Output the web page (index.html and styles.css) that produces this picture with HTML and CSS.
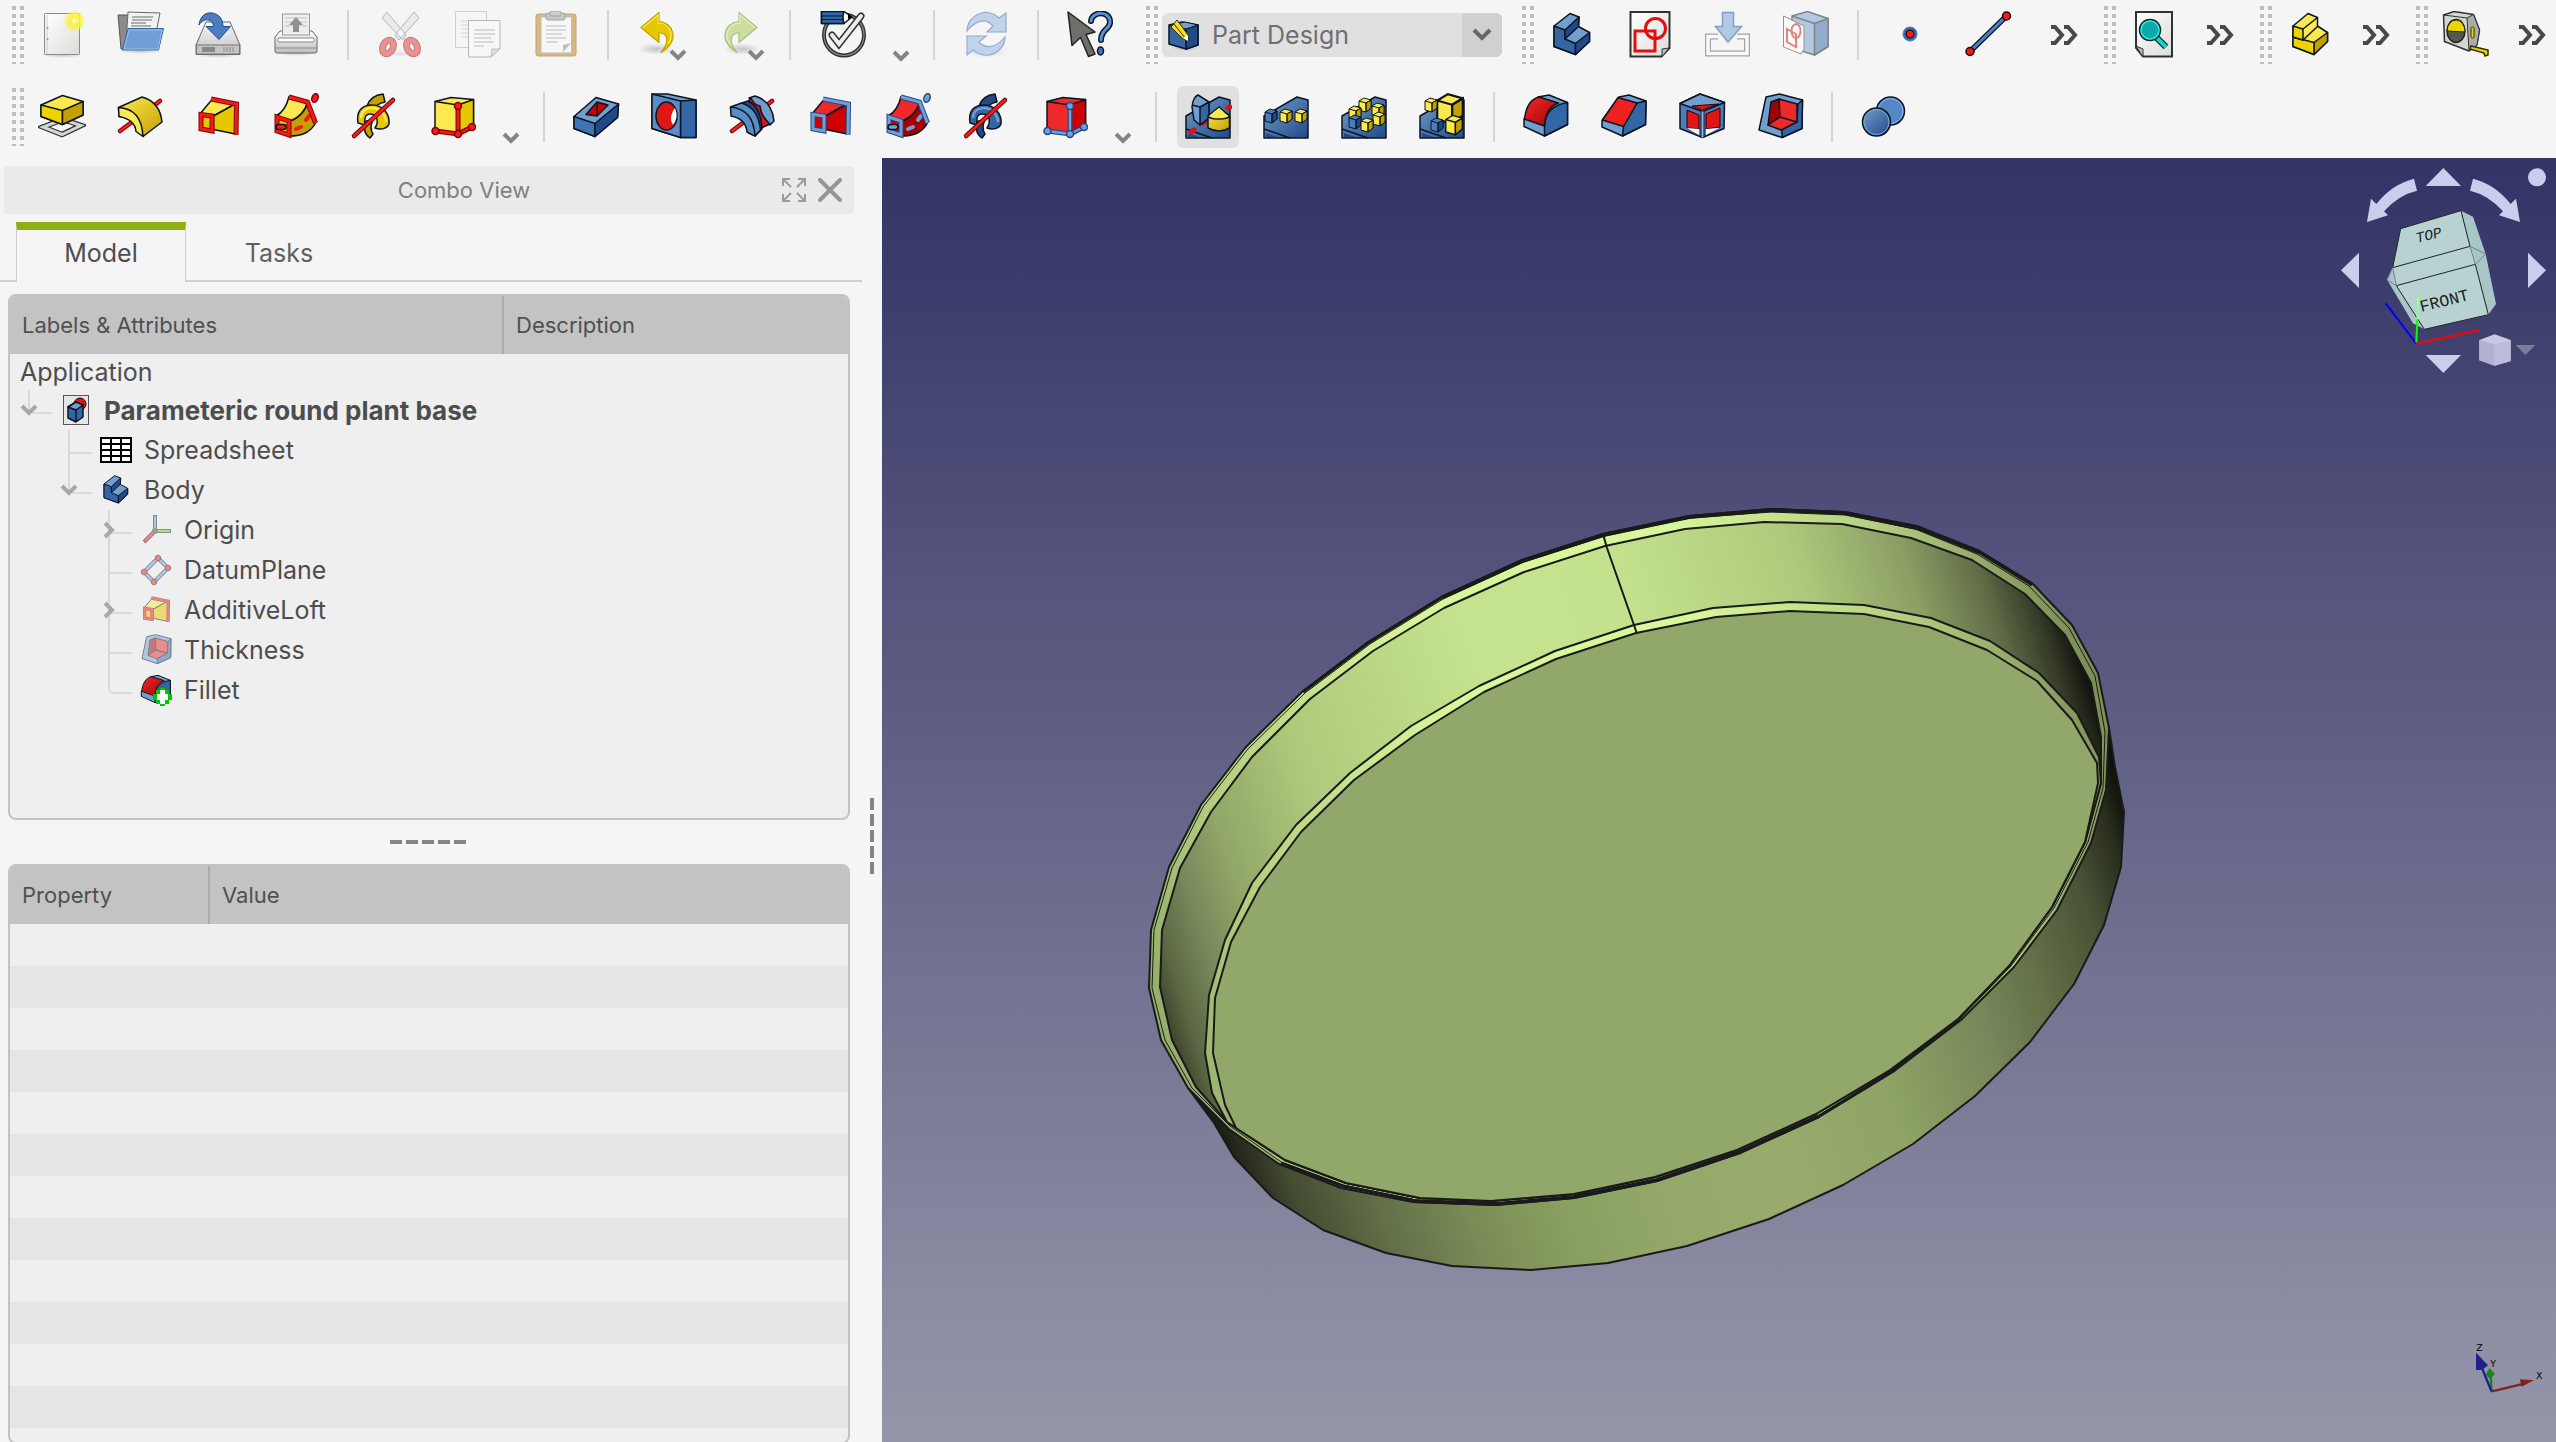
FILE: index.html
```html
<!DOCTYPE html>
<html lang="en">
<head>
<meta charset="utf-8">
<title>FreeCAD</title>
<link rel="stylesheet" href="styles.css">
</head>
<body>
<svg class="defs" aria-hidden="true">
  <defs>
    <linearGradient id="gy" x1="0" y1="0" x2="1" y2="1"><stop offset="0" stop-color="#fce94f"/><stop offset="1" stop-color="#c4a000"/></linearGradient>
    <linearGradient id="gb" x1="0" y1="0" x2="1" y2="1"><stop offset="0" stop-color="#729fcf"/><stop offset="1" stop-color="#204a87"/></linearGradient>
    <linearGradient id="gr" x1="0" y1="0" x2="1" y2="1"><stop offset="0" stop-color="#ef2929"/><stop offset="1" stop-color="#a40000"/></linearGradient>
    <linearGradient id="gg" x1="0" y1="0" x2="0" y2="1"><stop offset="0" stop-color="#fdfdfd"/><stop offset="1" stop-color="#bdbdbd"/></linearGradient>
    <linearGradient id="gp" x1="0" y1="0" x2="1" y2="1"><stop offset="0" stop-color="#fff"/><stop offset="1" stop-color="#dcdcd8"/></linearGradient>
    <radialGradient id="sun"><stop offset="0" stop-color="#fff"/><stop offset=".3" stop-color="#fbf24a"/><stop offset=".7" stop-color="#fbf24a" stop-opacity=".8"/><stop offset="1" stop-color="#fbf24a" stop-opacity="0"/></radialGradient>
    <radialGradient id="shade"><stop offset="0" stop-color="#000" stop-opacity=".2"/><stop offset="1" stop-color="#000" stop-opacity="0"/></radialGradient>
  </defs>
  <symbol id="cube" viewBox="0 0 14 16">
    <path class="a" d="M1 4 6 1l7 2v8l-5 4-7-2z"/><path class="b" d="M8 6l5-3v8l-5 4z"/><path class="n" d="M1 4l7 2v9M8 6l5-3"/>
  </symbol>
  <symbol id="plane" viewBox="0 0 48 48">
    <path class="o" fill="url(#gb)" d="M2 23 35 4l11 3v38H2z"/><path class="n" d="M2 36l26 9"/><path fill="#204a87" d="M4 40l11 4H4z"/>
  </symbol>
  <symbol id="body" viewBox="0 0 48 48">
    <path class="o" fill="#729fcf" d="M6 15 22 2.500l9 3.500-.5 9.500 11 6v9L27.500 43.500 6 35.500z"/>
    <path class="o" fill="#3465a4" d="M6 15l11 4v9l10.500 4.500v11L6 35.500z"/>
    <path class="o" fill="#204a87" d="M27.500 32.500l14-11v9l-14 13zM17 19 31 6l-.5 9.500L17 28z"/>
  </symbol>
  <symbol id="loft" viewBox="0 0 48 48">
    <path class="o" fill="var(--lt)" d="M5.500 21.500 18 6.500l24 4-22.500 12.500z"/>
    <path class="o" fill="var(--md)" d="M19.500 23 42 10.500 41.500 41l-22-4.500z"/>
    <path fill="none" stroke="var(--fo)" stroke-width="5" d="M17 6l25.500 5-.5 31"/>
    <path fill="none" stroke="var(--fr)" stroke-width="3" d="M17 6l25.500 5-.5 31"/>
    <path fill="var(--md)" stroke="var(--fo)" stroke-width="5" d="M7 21.500l11 1.500v15L7 36z"/>
    <path fill="none" stroke="var(--fr)" stroke-width="3" d="M7 21.500l11 1.500v15L7 36z"/>
  </symbol>
  <symbol id="pipe" viewBox="0 0 48 48">
    <path class="o" fill="var(--dk)" d="M17.500 28C28 24 34 17 36 8l8 21C39 39 31 43 17 43z"/>
    <path class="o" fill="var(--lt)" d="M4 23C12 19 15 12 17 3.500L36 8c-3 10-9 17-18 20z"/>
    <path stroke="var(--fr)" stroke-width="4" stroke-linecap="round" d="M24 36l5-2M34 27l3-4"/>
    <path fill="none" stroke="var(--fo)" stroke-width="5" d="M17 4l18.500 5 8 21"/>
    <path fill="none" stroke="var(--fr)" stroke-width="3" d="M17 4l18.500 5 8 21"/>
    <path fill="var(--md)" stroke="var(--fo)" stroke-width="5" d="M5 24l12 4v14L5 38z"/>
    <path fill="none" stroke="var(--fr)" stroke-width="3" d="M5 24l12 4v14L5 38z"/>
    <ellipse cx="43" cy="5" rx="3" ry="4.500" transform="rotate(20 43 5)" fill="var(--fr)" stroke="var(--fo)" stroke-width="1.500"/>
    <rect x="4" y="31.500" width="10" height="5" rx="2.500" fill="var(--fr)" stroke="#111" stroke-width="1.500"/>
  </symbol>
  <symbol id="helix" viewBox="0 0 48 48">
    <path class="o" fill="var(--dk)" d="M17 13C19 7 24 2 33 1l2 8c-6 1-10 4-12 9zM16 28l7-1c-3 6-2 11 0 14l-3 4c-6-4-7-11-4-17z"/>
    <path class="o" fill="var(--md)" fill-rule="evenodd" d="M8 30C6 18 12 12 22 12c11 0 18 9 17 19-2 5-8 6-14 4 5-8 1-14-5-14-5 0-6 5-5 11z"/>
    <path fill="none" stroke="var(--lt)" stroke-width="2.500" d="M11 25c0-7 5-10 11-10 8 0 14 7 14 14"/>
    <path stroke="#7a0000" stroke-width="4.500" stroke-linecap="round" d="M4 43 43 7"/><path stroke="#ef2020" stroke-width="2.500" stroke-linecap="round" d="M4 43 43 7"/>
  </symbol>
  <symbol id="prim" viewBox="0 0 48 48">
    <path class="o" fill="var(--lt)" d="M7 8.500l16-4 22.500 2V34L30 42 7 37z"/><path class="o" fill="var(--md)" d="M30 12l15.500-5.500V34L30 42z"/><path class="n" d="M7 8.500 30 12"/>
    <path fill="none" stroke="var(--fo)" stroke-width="5" d="M30 13v28L7.500 38M30 41l14-7"/><path fill="none" stroke="var(--fr)" stroke-width="2.500" d="M30 13v28L7.500 38M30 41l14-7"/>
    <g fill="var(--fr)" stroke="var(--fo)" stroke-width="1.500"><circle cx="30" cy="13" r="3.500"/><circle cx="30" cy="41" r="3.500"/><circle cx="7.500" cy="38" r="3.500"/><circle cx="44" cy="34" r="3.500"/></g>
  </symbol>
  <symbol id="fillet" viewBox="0 0 48 48">
    <path class="o" fill="#729fcf" d="M2 26 16 4l11-2 18.500 7.500v22L22.500 43 2 33.500z"/>
    <path class="o" fill="#3465a4" d="M22.500 43V33C23 20 30 12 45.500 9.500v22z"/>
    <path class="o" fill="url(#gr)" d="M2.500 26C4 13 9 6 17 4l19.500 6C27 13 23 22 22.500 33z"/>
  </symbol>
  <symbol id="thickness" viewBox="0 0 48 48">
    <path class="o" fill="#729fcf" d="M10 4l13.500-3L46.500 7 46 35.500l-20 9L3 37z"/><path class="o" fill="#3465a4" d="M42 11l4.500-4-.5 28.500-20 9v-8l15-8z"/>
    <path class="o" fill="#a40000" d="M23 6l-8 3-3 23 12-8z"/><path class="o" fill="#ef2929" d="M23 6l18 5v18l-17-5zM12 32l12-8 17 5-16 8z"/>
  </symbol>
  <symbol id="undo" viewBox="0 0 48 48">
    <ellipse cx="20" cy="38" rx="18" ry="6" fill="url(#shade)"/>
    <path fill="var(--md)" stroke="var(--fo)" stroke-width="1.200" stroke-linejoin="round" d="M5 16.500 23 1.500v9c14 1 22 18 2 31 9-11 7-19-2-20v10z"/>
    <path fill="none" stroke="var(--lt)" stroke-width="1.200" d="M7 16.500 22 4v8c11 0 17 11 10 21"/>
  </symbol>
  <symbol id="chev" viewBox="0 0 18 12"><path d="M2 2l7 7 7-7" fill="none" stroke="currentColor" stroke-width="4"/></symbol>
  <symbol id="more" viewBox="0 0 28 20"><path d="M1 2h4l7 8-7 8H1M14 2h4l7 8-7 8h-4" fill="none" stroke="#484848" stroke-width="4"/></symbol>
</svg>

<header class="toolbars">
  <div class="row">
    <div class="group" role="toolbar" aria-label="File">
      <i class="grip"></i>
      <button class="tool" aria-label="New"><svg viewBox="0 0 48 48"><ellipse cx="24" cy="44" rx="22" ry="3" fill="url(#shade)"/><rect x="6.500" y="2.500" width="35" height="41" rx="1" fill="url(#gp)" stroke="#8a8a8a"/><path d="M9 4v38" stroke="#ccc"/><circle cx="9.500" cy="17" r="1" fill="#999"/><circle cx="9.500" cy="28" r="1" fill="#999"/><circle cx="36.500" cy="10" r="11" fill="url(#sun)"/></svg></button>
      <button class="tool" aria-label="Open"><svg viewBox="0 0 48 48"><ellipse cx="24" cy="40" rx="22" ry="3" fill="url(#shade)"/><path d="M2 4h9l5 5-6 29H5z" fill="#8b8b8b" stroke="#555"/><path d="M12 1l32 1-4 20-30 10z" fill="#f2f2f2" stroke="#666"/><path d="M16 6h21M16 9h20M15 12h15M15 15h20" stroke="#999" stroke-width="1.500"/><path d="M12 17.500h35.500l-5 21.500H6.500z" fill="#6f9fd6" stroke="#3465a4"/><path d="M13 19h33l-4 19H8z" fill="none" stroke="#9dbde6"/></svg></button>
      <button class="tool" aria-label="Save"><svg viewBox="0 0 48 48"><ellipse cx="24" cy="44" rx="23" ry="3" fill="url(#shade)"/><path d="M12 11h24l10 23v9.500H2V34z" fill="url(#gg)" stroke="#666" stroke-linejoin="round"/><path d="M2.500 34h43v9h-43z" fill="#c5c5c5" stroke="#777"/><ellipse cx="24" cy="24" rx="15" ry="8" fill="none" stroke="#ddd"/><path d="M8 36h13v5H8z" fill="#888"/><path d="M30 36v5M33 36v5M36 36v5M39 36v5" stroke="#888"/><path d="M5 14C6 5 12 1 18 2c7 1 11 6 11 13.500h7.500L25 28.500 12 15.500h7.500C19 8 10 6 5 14z" fill="#4a7cbf" stroke="#204a87"/></svg></button>
      <button class="tool" aria-label="Print"><svg viewBox="0 0 48 48"><ellipse cx="24" cy="42" rx="22" ry="3" fill="url(#shade)"/><path d="M8 20h32l5 6v14q0 2-2 2H5q-2 0-2-2V26z" fill="url(#gg)" stroke="#666"/><rect x="10.500" y="3" width="27" height="21" fill="#eee" stroke="#999"/><path d="M13 7h22M13 11h22M13 15h22" stroke="#c4c4c4"/><path d="M24 6l7 8h-4v7h-6v-7h-4z" fill="#909090"/><rect x="6" y="27" width="36" height="4" rx="1" fill="#fff" stroke="#888"/><path d="M3 37h42" stroke="#888"/></svg></button>
      <i class="sep"></i>
      <button class="tool off" disabled aria-label="Cut"><svg viewBox="0 0 48 48"><ellipse cx="25" cy="43" rx="12" ry="3" fill="url(#shade)"/><path d="M11 1 6 7l21 22 3-5zM38 1l5 6-20 22-4-5z" fill="#e0e0e0" stroke="#777"/><g fill="none" stroke="#8f0a0a" stroke-width="7"><ellipse cx="12" cy="36" rx="5" ry="7" transform="rotate(28 12 36)"/><ellipse cx="36" cy="36" rx="5" ry="7" transform="rotate(-28 36 36)"/></g><g fill="none" stroke="#e03030" stroke-width="5"><ellipse cx="12" cy="36" rx="5" ry="7" transform="rotate(28 12 36)"/><ellipse cx="36" cy="36" rx="5" ry="7" transform="rotate(-28 36 36)"/></g></svg></button>
      <button class="tool off" disabled aria-label="Copy"><svg viewBox="0 0 48 48"><path d="M1.500.5h31v36h-31z" fill="#f6f6f6" stroke="#aaa"/><path d="M7 10h8M7 14h8M7 18h8M7 22h8M7 26h8" stroke="#ccc" stroke-width="1.500"/><path d="M14.500 9.500H46V38l-9 8H14.500z" fill="#fafafa" stroke="#777"/><path d="M20 19h21M20 23h21M20 27h17M20 31h20M20 35h10" stroke="#aaa" stroke-width="1.500"/><path d="M46 38h-8l-1 8z" fill="#ccc" stroke="#888"/></svg></button>
      <button class="tool off" disabled aria-label="Paste"><svg viewBox="0 0 48 48"><rect x="4" y="3" width="40" height="42" rx="2" fill="#c17d11" stroke="#8f5902"/><path d="M9 6h30.500v36H9z" fill="#fafafa" stroke="#888"/><rect x="14" y="2" width="19" height="7" rx="2" fill="#999" stroke="#555"/><rect x="18" y="0" width="11" height="5" rx="2" fill="#aaa" stroke="#555"/><path d="M14 15h20M14 19h20M14 23h16M14 27h20M14 31h12" stroke="#aaa" stroke-width="1.500"/><path d="M39 32l-8 9V34z" fill="#888"/></svg></button>
      <i class="sep"></i>
      <button class="tool" aria-label="Undo"><svg class="yel undo" viewBox="0 0 48 48"><use href="#undo"/></svg><svg class="chev over"><use href="#chev"/></svg></button>
      <button class="tool" aria-label="Redo"><svg class="grn" viewBox="0 0 48 48"><g transform="matrix(-1 0 0 1 48 0)"><use href="#undo"/></g></svg><svg class="chev over"><use href="#chev"/></svg></button>
      <i class="sep"></i>
      <button class="tool" aria-label="Validate"><svg viewBox="0 0 48 48"><ellipse cx="26" cy="24" rx="20" ry="20.500" fill="none" stroke="#2e3436" stroke-width="4"/><ellipse cx="26" cy="24" rx="20" ry="20.500" fill="none" stroke="#888a85" stroke-width="1.200"/><path d="M14 24l7 9L43 5" fill="none" stroke="#2e3436" stroke-width="7" stroke-linecap="round"/><path d="M14 24l7 9L43 5" fill="none" stroke="#eeeeec" stroke-width="4" stroke-linecap="round"/><path class="o" d="M3.500.5H26l8 5.500-8 6.500H3.500z" fill="#fff"/><path class="o" d="M3.500.5H26q-2 6 0 12H3.500z" fill="#3465a4"/><path d="M4 5h21M4 8.500h21" stroke="#0b1521"/><path d="M30 3l4 3-4 3z"/></svg></button>
      <button class="drop" aria-label="More"><svg class="chev"><use href="#chev"/></svg></button>
      <i class="sep"></i>
      <button class="tool off" disabled aria-label="Refresh"><svg viewBox="0 0 48 48"><ellipse cx="24" cy="40" rx="22" ry="7" fill="url(#shade)"/><path d="M5 20C5 4 25-5 37 7l7-5v19H25l6-6C23 6 13 10 5 20z" fill="#8fb3e3" stroke="#3465a4" stroke-width="1.200"/><path d="M43 26c0 16-20 24-32 13l-6 5V25h19l-7 6c7 8 18 5 26-5z" fill="#8fb3e3" stroke="#3465a4" stroke-width="1.200"/></svg></button>
      <i class="sep"></i>
      <button class="tool" aria-label="What's this?"><svg viewBox="0 0 48 48"><path d="M2 1l27 20-9 2.500 9 19.500-6.500 2.500-8-19-8.500 8z" fill="#6d6f6b" stroke="#222" stroke-width="1.500" stroke-linejoin="round"/><path d="M25 10C26 0 45-1 44 12c-1 7-9 6-9 17" fill="none" stroke="#0b1521" stroke-width="6" stroke-linecap="round"/><path d="M25 10C26 0 45-1 44 12c-1 7-9 6-9 17" fill="none" stroke="#5c8fd0" stroke-width="3" stroke-linecap="round"/><ellipse cx="34.500" cy="40" rx="3" ry="4" fill="#3f78c0" stroke="#0b1521" stroke-width="1.500"/></svg></button>
    </div>
    <div class="group bench">
      <i class="grip"></i>
      <div class="combo">
        <svg class="combo-icon" viewBox="0 0 32 32"><ellipse cx="17" cy="29" rx="13" ry="3" fill="url(#shade)"/><path class="o" fill="#3465a4" d="M1 6l13-3 16 3v20l-12 4L1 25z"/><path class="o" fill="#204a87" d="M18 10l12-4v20l-12 4z"/><path d="M1 6l17 4 12-4-13-3z" fill="#729fcf" stroke="#0b1521"/><path d="M3 8 9 1l11 15v6l-6-3z" fill="#f5dc2a" stroke="#302b00"/><path d="M6 5l11 14" stroke="#302b00"/><path d="M15 19l5-3v6z" fill="#fff"/></svg>
        <select aria-label="Workbench"><option>Part Design</option></select>
        <span class="combo-arrow"><svg width="20" height="14" viewBox="0 0 20 14"><path d="M2 2l8 8 8-8" fill="none" stroke="#666" stroke-width="4"/></svg></span>
      </div>
    </div>
    <div class="group grow" role="toolbar" aria-label="Part Design Helper">
      <i class="grip"></i>
      <button class="tool" aria-label="Create body"><svg viewBox="0 0 48 48"><use href="#body"/></svg></button>
      <button class="tool" aria-label="Create sketch"><svg viewBox="0 0 48 48"><path d="M4.500 1h39v36l-8 8.500h-31z" fill="url(#gp)" stroke="#2e3436" stroke-width="2"/><path d="M43 37l-7 1v8z" fill="#bbb" stroke="#2e3436"/><path d="M9 20h20v20H9z" fill="none" stroke="#e01010" stroke-width="3"/><circle cx="29.500" cy="17.500" r="10" fill="none" stroke="#e01010" stroke-width="3"/></svg></button>
      <button class="tool off" disabled aria-label="Edit sketch"><svg viewBox="0 0 48 48"><path d="M14 25.500H4v17h39v-17H33" fill="none" stroke="#555" stroke-width="6"/><path d="M14 25.500H4v17h39v-17H33" fill="none" stroke="#fff" stroke-width="3.500"/><path d="M18.500 1.500h11v14h8L24 31 11.500 15.500h7z" fill="#6f9fd6" stroke="#204a87" stroke-width="1.500"/></svg></button>
      <button class="tool off" disabled aria-label="Map sketch"><svg viewBox="0 0 48 48"><path class="o" fill="#729fcf" d="M10 5 25.500.5 46 7.500v28L32.500 44 10 37z"/><path class="o" fill="#3465a4" d="M32.500 12.500l13.500-5v28L32.500 44z"/><path class="n" d="M10 5l22.500 7.500"/><path d="M1.500 5 22 15v23l-3 5L1.500 36z" fill="#fff" stroke="#333"/><path d="M5 18l9 5v13l-9-5z" fill="none" stroke="#e01010" stroke-width="2"/><ellipse cx="14" cy="20" rx="4.500" ry="7" fill="none" stroke="#e01010" stroke-width="2"/></svg></button>
      <i class="sep"></i>
      <button class="tool" aria-label="Datum point"><svg viewBox="0 0 48 48"><circle cx="24" cy="23" r="7" fill="#3465a4" stroke="#4a7cbf"/><circle cx="24" cy="23" r="4" fill="#ef1c1c" stroke="#280000"/></svg></button>
      <button class="tool" aria-label="Datum line"><svg viewBox="0 0 48 48"><path d="M6 40.500 42.500 5" stroke="#0b1521" stroke-width="5.500"/><path d="M6 40.500 42.500 5" stroke="#4a82c8" stroke-width="3"/><g fill="#ef1c1c" stroke="#280000" stroke-width="1.500"><circle cx="6" cy="40.500" r="4"/><circle cx="42.500" cy="5" r="4"/></g></svg></button>
      <button class="ext" aria-label="Show more"><svg><use href="#more"/></svg></button>
    </div>
    <div class="group" role="toolbar" aria-label="View">
      <i class="grip"></i>
      <button class="tool" aria-label="Fit all"><svg viewBox="0 0 48 48"><path d="M6 1h36v44.500H13L6 37z" fill="url(#gp)" stroke="#2e3436" stroke-width="2"/><path d="M6 35l7 3v8z" fill="#bbb" stroke="#2e3436"/><path d="M26 26l10 10" stroke="#042a2a" stroke-width="6.500"/><path d="M26 26l10 10" stroke="#16d0d2" stroke-width="4"/><circle cx="20" cy="19" r="10.500" fill="#0fa8a8" stroke="#042a2a" stroke-width="1.500"/><circle cx="20" cy="19" r="9" fill="none" stroke="#34e0e2" stroke-width="1.500"/></svg></button>
      <button class="ext" aria-label="Show more"><svg><use href="#more"/></svg></button>
    </div>
    <div class="group" role="toolbar" aria-label="Structure">
      <i class="grip"></i>
      <button class="tool" aria-label="Create part"><svg class="yel" viewBox="0 0 48 48"><path class="o" fill="#fce94f" d="M7 28l24.500-13 10 6.500v9L28 43.500 7 35.500z"/><path class="o" fill="#c4a000" d="M28 31.500l13.500-10v9L28 43.500z"/><path class="o" fill="#edd400" d="M7 26l21 5.500v12L7 35.500z"/><path class="o" fill="#fce94f" d="M7 15 22 2.500l9.500 4v9L17 29 7 26z"/><path class="o" fill="#edd400" d="M7 15l10 3v11L7 26z"/><path class="n" d="M17 18 31.500 6.500"/></svg></button>
      <button class="ext" aria-label="Show more"><svg><use href="#more"/></svg></button>
    </div>
    <div class="group last" role="toolbar" aria-label="Measure">
      <i class="grip"></i>
      <button class="tool" aria-label="Measure"><svg viewBox="0 0 48 48"><path d="M1.500 4 12 .5l19.500 3 6 15.500L35 34l-8 6-24.500-9.500z" fill="#d3d7cf" stroke="#2e3436" stroke-width="1.500" stroke-linejoin="round"/><path d="M25 7l6.500-3.500 6 15.500L35 34l-8 6z" fill="#a9aca6" stroke="#2e3436"/><path d="M1.500 4 25 7" stroke="#2e3436"/><ellipse cx="14" cy="20" rx="9" ry="11.500" fill="#555753" stroke="#222" stroke-width="1.500"/><path d="M5 20a9 11.500 0 0 1 18 1z" fill="#edd400" stroke="#222"/><rect x="29" y="16" width="3" height="11" rx="1.500" fill="#edd400" stroke="#302b00"/><path d="M29 35l17 4v5l-3 1-1-3-14-4z" fill="#edd400" stroke="#302b00" stroke-width="1.500"/></svg></button>
      <button class="ext" aria-label="Show more"><svg><use href="#more"/></svg></button>
    </div>
  </div>

  <div class="row">
    <div class="group" role="toolbar" aria-label="Part Design Modeling">
      <i class="grip"></i>
      <button class="tool" aria-label="Pad"><svg class="yel" viewBox="0 0 48 48"><path d="M5 34l19 7.500 19-9-18-6z" fill="none" stroke="#2e3436" stroke-width="5.500"/><path d="M5 34l19 7.500 19-9-18-6z" fill="none" stroke="#d3d7cf" stroke-width="3"/><path class="o" fill="#fce94f" d="M3 12 24.500 2.500 45 8.500V22L24.500 31.500 3 23.500z"/><path class="o" fill="#edd400" d="M3 12l21.500 5.500v14L3 23.500z"/><path class="o" fill="#c4a000" d="M24.500 17.500l20.500-9V22l-20.500 9.500z"/></svg></button>
      <button class="tool" aria-label="Revolution"><svg class="yel" viewBox="0 0 48 48"><path d="M4 38 44 8" stroke="#7a0000" stroke-width="4.500" stroke-linecap="round"/><path d="M4 38 44 8" stroke="#ef2020" stroke-width="2.500" stroke-linecap="round"/><path class="o" fill="url(#gy)" d="M2.500 14.500 26 4q18 5 20 25L27 43.500q-2-6-3-10-8-10-21-10z"/><path class="o" fill="#fce94f" d="M2.500 14.500q23 1 24.500 29l-7-5q-1-12-17-15z"/></svg></button>
      <button class="tool" aria-label="Additive loft"><svg class="yel"><use href="#loft"/></svg></button>
      <button class="tool" aria-label="Additive pipe"><svg class="yel"><use href="#pipe"/></svg></button>
      <button class="tool" aria-label="Additive helix"><svg class="yel"><use href="#helix"/></svg></button>
      <button class="tool" aria-label="Additive box"><svg class="yel"><use href="#prim"/></svg></button>
      <button class="drop" aria-label="Additive primitives"><svg class="chev"><use href="#chev"/></svg></button>
      <i class="sep"></i>
      <button class="tool" aria-label="Pocket"><svg viewBox="0 0 48 48"><path class="o" fill="#729fcf" d="M2 23.500 24 4.500l22.500 6.500-1 13.500L23 43.500 2 35.500z"/><path class="o" fill="#3f74b5" d="M2 23.500l21 7v13l-21-8z"/><path class="o" fill="#204a87" d="M23 30.500 46.500 11l-1 13.500L23 43.500z"/><path class="o" fill="#cc0000" d="M14 21.500 25 9l11 3-11 11z"/><path class="n" d="M25 9v14"/></svg></button>
      <button class="tool" aria-label="Hole"><svg viewBox="0 0 48 48"><path class="o" fill="#729fcf" d="M2 1h15.500L46 7v37.500H30.500L2 35.500z"/><path class="o" fill="#3465a4" d="M30.500 8 46 7v37.500H30.500z"/><path class="o" fill="#5a8cc6" d="M2 1l28.500 7v36.500L2 35.500z"/><ellipse class="o" cx="16.500" cy="23" rx="10.500" ry="14" fill="#e01515"/><path d="M25 15q4 10-2 17-5-8 2-17z" fill="#fff"/></svg></button>
      <button class="tool" aria-label="Groove"><svg viewBox="0 0 48 48"><path d="M4 38 44 8" stroke="#7a0000" stroke-width="4.500" stroke-linecap="round"/><path d="M4 38 44 8" stroke="#ef2020" stroke-width="2.500" stroke-linecap="round"/><path class="o" fill="#729fcf" d="M21 5l6-2q17 5 19 25l-4 4z"/><path class="o" fill="#e01515" d="M18 11l5-6q3 7 9 8 1 11 10 18l-11 5z"/><path class="o" fill="#204a87" d="M14 10l6-2q13 6 14 28l-7 7z"/><path class="o" fill="#5a8cc6" d="M2.500 14l11-4q17 5 19 27L27 43q-3-1-8-4-1-13-16-16z"/><path class="n" d="M2.500 14q23 2 24.500 29"/></svg></button>
      <button class="tool" aria-label="Subtractive loft"><svg class="red"><use href="#loft"/></svg></button>
      <button class="tool" aria-label="Subtractive pipe"><svg class="red"><use href="#pipe"/></svg></button>
      <button class="tool" aria-label="Subtractive helix"><svg class="blu"><use href="#helix"/></svg></button>
      <button class="tool" aria-label="Subtractive box"><svg class="red"><use href="#prim"/></svg></button>
      <button class="drop" aria-label="Subtractive primitives"><svg class="chev"><use href="#chev"/></svg></button>
      <i class="sep"></i>
      <button class="tool active" aria-label="Mirrored"><svg viewBox="0 0 48 48"><use href="#plane"/><path d="M7 39l3-2M19 30l3-2M44 15l2-1" stroke="#e01010" stroke-width="5" stroke-linecap="round"/><path class="o" fill="#729fcf" d="M8 14q1-10 6-12l11 7v16l-9 7-6-5z"/><path class="o" fill="#3465a4" d="M16 14l9-5v16l-9 7z"/><path class="n" d="M8 12l8 2"/><path class="o" fill="url(#gy)" d="M24 23l11-9 10.500 9v12q-10 6-21.500 0z"/><ellipse class="o" cx="34.700" cy="23" rx="10.500" ry="3" fill="#fce94f"/><path fill="#fce94f" d="M26 22l9-7 8 7z"/></svg></button>
      <button class="tool" aria-label="Linear pattern"><svg viewBox="0 0 48 48"><use href="#plane"/><use class="cb" href="#cube" x="2" y="15" width="14" height="16"/><use class="cy" href="#cube" x="17" y="15" width="14" height="16"/><use class="cy" href="#cube" x="32" y="15" width="14" height="16"/></svg></button>
      <button class="tool" aria-label="Polar pattern"><svg viewBox="0 0 48 48"><use href="#plane"/><use class="cy" href="#cube" x="18" y="4" width="14" height="16"/><use class="cy" href="#cube" x="31" y="9" width="14" height="16"/><use class="cy" href="#cube" x="8" y="12" width="14" height="16"/><use class="cy" href="#cube" x="32" y="18" width="14" height="16"/><use class="cb" href="#cube" x="8" y="21" width="14" height="16"/><use class="cy" href="#cube" x="20" y="24" width="14" height="16"/></svg></button>
      <button class="tool" aria-label="Multi transform"><svg viewBox="0 0 48 48"><use href="#plane"/><use class="cy" href="#cube" x="16" y="-1" width="32" height="34"/><use class="cy" href="#cube" x="6" y="4" width="14" height="16"/><use class="cb" href="#cube" x="12" y="24" width="14" height="16"/><use class="cy" href="#cube" x="26" y="21" width="20" height="22"/></svg></button>
      <i class="sep"></i>
      <button class="tool" aria-label="Fillet"><svg><use href="#fillet"/></svg></button>
      <button class="tool" aria-label="Chamfer"><svg viewBox="0 0 48 48"><path class="o" fill="#729fcf" d="M2 27.500 19 4l10-2 17 6-.5 23.500L22.500 43 2 34z"/><path class="o" fill="#3465a4" d="M22.500 43l1-9.500L37 10l9-2-.5 23.500z"/><path class="o" fill="#ef2020" d="M2.500 27 18 4.500 37 10 23.500 33.500z"/></svg></button>
      <button class="tool" aria-label="Draft"><svg viewBox="0 0 48 48"><path class="o" fill="#4a7cbf" d="M2 10.500 22 1l24.500 8.500L46 35.500l-21.500 9-22.500-9z"/><path class="o" fill="#729fcf" d="M2 10.500 22 1l24.500 8.500-22 9z"/><path d="M14 13l27-2-17 6zM9 17l12 5v14l-12-1zM28 21l14-6v19l-14 2z" fill="#e01515" stroke="#280000"/><path d="M9 35l12 1v6zM28 36l13-1-13 7z" fill="#fff"/><path d="M24.500 18.500v26" stroke="#0b1521" stroke-width="4"/><path d="M24.500 18.500v26" stroke="#8fb8e8" stroke-width="2"/></svg></button>
      <button class="tool" aria-label="Thickness"><svg><use href="#thickness"/></svg></button>
      <i class="sep"></i>
      <button class="tool" aria-label="Boolean"><svg viewBox="0 0 48 48"><circle class="o" cx="30.500" cy="18" r="14" fill="#5487c4"/><circle cx="30.500" cy="18" r="12.500" fill="none" stroke="#8fb8e8"/><circle class="o" cx="16.500" cy="29" r="14" fill="url(#gb)"/><circle cx="16.500" cy="29" r="12.500" fill="none" stroke="#7aa8de"/></svg></button>
    </div>
  </div>
</header>

<main class="work">
  <aside class="side">
    <div class="dock-title">
      <h1>Combo View</h1>
      <button aria-label="Float"><svg width="24" height="24" viewBox="0 0 24 24"><path d="M1 8V1h7M16 1h7v7M23 16v7h-7M8 23H1v-7M1 1l8 8M23 1l-8 8M23 23l-8-8M1 23l8-8" fill="none" stroke="#9a9a9a" stroke-width="2"/></svg></button>
      <button aria-label="Close"><svg width="24" height="24" viewBox="0 0 24 24"><path d="M2 2l20 20M22 2 2 22" stroke="#969696" stroke-width="4" stroke-linecap="round"/></svg></button>
    </div>
    <div class="tabs" role="tablist">
      <button class="tab on" role="tab" aria-selected="true">Model</button>
      <button class="tab" role="tab" aria-selected="false">Tasks</button>
    </div>
    <section class="box tree">
      <div class="head tree-head"><span>Labels &amp; Attributes</span><span>Description</span></div>
      <div class="tree-body">
        <p class="app">Application</p>
        <ul>
          <li><div class="item"><button class="toggle" aria-label="Collapse"><svg class="chev"><use href="#chev"/></svg></button><svg class="ico" viewBox="0 0 32 32"><rect x="3.500" y="1.500" width="25" height="29" fill="#e6e6e6" stroke="#555"/><circle cx="20" cy="10" r="6" fill="#e01515" stroke="#280000"/><path class="o" fill="#3465a4" d="M8 13l8-5 7 3v12l-7 5-8-4z"/><path class="o" fill="#729fcf" d="M8 13l8-5 7 3-7 5z"/><path class="n" d="M16 16v12"/></svg><b>Parameteric round plant base</b></div>
            <ul>
              <li><div class="item"><i class="toggle"></i><svg class="ico" viewBox="0 0 32 32"><path d="M1 4h30v24H1zM1 10h30M1 16h30M1 22h30M11 4v24M21 4v24" fill="#fff" stroke="#000" stroke-width="2"/></svg>Spreadsheet</div></li>
              <li><div class="item"><button class="toggle" aria-label="Collapse"><svg class="chev"><use href="#chev"/></svg></button><svg class="ico"><use href="#body"/></svg>Body</div>
                <ul>
                  <li><div class="item"><button class="toggle shut" aria-label="Expand"><svg class="chev"><use href="#chev"/></svg></button><svg class="ico off" viewBox="0 0 32 32"><path d="M15 17V1" stroke="#223" stroke-width="4"/><path d="M15 17V2" stroke="#6f9fe0" stroke-width="2"/><path d="M15 17h16" stroke="#232" stroke-width="4"/><path d="M15 17h15" stroke="#73d216" stroke-width="2"/><path d="M15 17 4 28" stroke="#400" stroke-width="4"/><path d="M15 17 5 27" stroke="#ef2929" stroke-width="2"/><circle cx="15" cy="17" r="3" fill="#444"/></svg>Origin</div></li>
                  <li><div class="item"><i class="toggle"></i><svg class="ico off" viewBox="0 0 32 32"><path d="M4 18 18 4l10 10-14 14z" fill="none" stroke="#0b1521" stroke-width="4"/><path d="M4 18 18 4l10 10-14 14z" fill="none" stroke="#6f9fd6" stroke-width="2.500"/><g fill="#ef1c1c" stroke="#280000" stroke-width=".8"><circle cx="4" cy="18" r="2.800"/><circle cx="18" cy="4" r="2.800"/><circle cx="28" cy="14" r="2.800"/><circle cx="14" cy="28" r="2.800"/></g></svg>DatumPlane</div></li>
                  <li><div class="item"><button class="toggle shut" aria-label="Expand"><svg class="chev"><use href="#chev"/></svg></button><svg class="ico yel off"><use href="#loft"/></svg>AdditiveLoft</div></li>
                  <li><div class="item"><i class="toggle"></i><svg class="ico off"><use href="#thickness"/></svg>Thickness</div></li>
                  <li><div class="item"><i class="toggle"></i><svg class="ico" viewBox="0 0 32 32"><use href="#fillet" width="32" height="32"/><path d="M20 14h5v2h4v4h3v6h-3v4h-4v2h-5v-2h-4v-4h-3v-6h3v-4h4z" fill="#00c800"/><path d="M20 16h5v4h3v6h-3v4h-5v-4h-3v-6h3z" fill="#fff"/></svg>Fillet</div></li>
                </ul>
              </li>
            </ul>
          </li>
        </ul>
      </div>
    </section>
    <div class="handle"></div>
    <section class="box props">
      <table>
        <colgroup><col class="c-prop"><col></colgroup>
        <thead><tr class="head"><th>Property</th><th>Value</th></tr></thead>
        <tbody>
          <tr><td></td><td></td></tr><tr><td></td><td></td></tr><tr><td></td><td></td></tr><tr><td></td><td></td></tr>
          <tr><td></td><td></td></tr><tr><td></td><td></td></tr><tr><td></td><td></td></tr><tr><td></td><td></td></tr>
          <tr><td></td><td></td></tr><tr><td></td><td></td></tr><tr><td></td><td></td></tr><tr><td></td><td></td></tr>
          <tr><td></td><td></td></tr>
        </tbody>
      </table>
    </section>
  </aside>
  <div class="splitter"><i class="handle-v"></i></div>

  <section class="view3d" aria-label="3D view">
    <svg class="scene" viewBox="882 158 1674 1284">
      <defs>
        <linearGradient id="inner" gradientUnits="userSpaceOnUse" x1="722" y1="-236" x2="1686" y2="-550">
          <stop offset=".01" stop-color="#14150e"/><stop offset=".03" stop-color="#3a412b"/><stop offset=".053" stop-color="#5a6642"/><stop offset=".09" stop-color="#76865a"/><stop offset=".14" stop-color="#91a667"/><stop offset=".24" stop-color="#afca7c"/><stop offset=".44" stop-color="#c6e48f"/><stop offset=".59" stop-color="#c4e28d"/><stop offset=".76" stop-color="#afca7c"/><stop offset=".865" stop-color="#8c9f64"/><stop offset=".93" stop-color="#626e48"/><stop offset=".975" stop-color="#343a26"/><stop offset="1" stop-color="#14150e"/>
        </linearGradient>
        <linearGradient id="outer" gradientUnits="userSpaceOnUse" x1="722" y1="-236" x2="1686" y2="-550">
          <stop offset=".05" stop-color="#1c1e14"/><stop offset=".1" stop-color="#444c32"/><stop offset=".175" stop-color="#626f48"/><stop offset=".26" stop-color="#7a8c57"/><stop offset=".35" stop-color="#8aa061"/><stop offset=".45" stop-color="#94a969"/><stop offset=".57" stop-color="#98ab6d"/><stop offset=".69" stop-color="#8ea365"/><stop offset=".8" stop-color="#77875a"/><stop offset=".86" stop-color="#647149"/><stop offset=".93" stop-color="#4a5436"/><stop offset=".975" stop-color="#2a2e1f"/><stop offset="1" stop-color="#0e0f0a"/>
        </linearGradient>
        <linearGradient id="rim" gradientUnits="userSpaceOnUse" x1="722" y1="-236" x2="1686" y2="-550">
          <stop offset="0" stop-color="#8fa666"/><stop offset=".15" stop-color="#b4cf80"/><stop offset=".4" stop-color="#d8f79b"/><stop offset=".65" stop-color="#d8f79b"/><stop offset=".85" stop-color="#b4cf80"/><stop offset="1" stop-color="#7d9058"/>
        </linearGradient>
      </defs>
      <g stroke="#1a1a1a" stroke-width="2" stroke-linejoin="round">
        <path fill="url(#outer)" d="M1188 1088L1214 1123 1234 1157 1273 1198 1323 1230 1386 1253 1452 1266 1531 1270 1608 1263 1687 1246 1769 1219 1843 1185 1913 1144 1975 1096 2030 1042 2074 984 2104 925 2121 867 2124 812 2115 767 2109 728 2000 700 1300 1000z"/>
        <path fill="url(#rim)" d="M1169 867L1201 805 1245 748 1303 691 1368 642 1441 597 1522 560 1603 534 1689 516 1771 509 1845 512 1917 526 1980 551 2032 583 2072 625 2098 673 2109 728 2106 790 2091 843 2057 910 2014 967 1961 1020 1893 1072 1819 1117 1740 1153 1657 1181 1574 1198 1496 1205 1413 1202 1341 1188 1279 1164 1229 1129 1188 1088 1161 1040 1149 988 1151 930z"/>
        <path fill="url(#inner)" d="M1162 930L1180 868 1211 812 1252 757 1310 699 1373 651 1444 608 1524 572 1605 546 1685 529 1764 522 1842 524 1911 538 1972 560 2025 594 2065 635 2091 683 2101 737 2101 783 2085 842 2052 907 2009 966 1958 1019 1890 1070 1816 1114 1737 1150 1655 1177 1574 1194 1491 1201 1420 1198 1346 1183 1285 1160 1227 1122 1196 1087 1172 1040 1160 987z"/>
        <path fill="url(#rim)" d="M2099 757L2077 713 2039 673 1990 641 1931 618 1864 605 1790 602 1713 608 1634 625 1555 651 1479 686 1411 726 1350 773 1296 825 1252 883 1225 940 1209 995 1205 1053 1212 1093 1227 1122 1285 1160 1346 1183 1420 1198 1491 1201 1574 1194 1655 1177 1737 1150 1816 1114 1890 1070 1958 1019 2009 966 2052 907 2085 842 2101 783z"/>
        <path fill="#92a86a" d="M2098 783L2097 763 2072 720 2037 681 1987 650 1929 627 1864 614 1790 611 1716 617 1636 633 1556 659 1484 692 1415 735 1354 780 1301 832 1260 887 1231 942 1215 998 1213 1053 1225 1105 1236 1128 1285 1160 1346 1183 1420 1198 1491 1201 1574 1194 1655 1177 1737 1150 1816 1114 1890 1070 1958 1019 2009 966 2052 907 2085 842z"/>
        <path fill="none" stroke-width="1" d="M1154 930L1172 868 1203 807 1247 750 1305 693 1370 644 1443 599 1524 562 1605 536 1690 518 1771 512 1845 515 1915 529 1977 554 2029 586 2069 628 2095 676 2105 732 2103 788 2088 842 2054 908 2011 966 1959 1020M1154 930L1152 988 1165 1040 1192 1088 1230 1126 1281 1162 1343 1185 1415 1200"/>
        <path fill="none" stroke-width="3" d="M1303 692L1368 643 1441 598M1917 528L1980 553 2032 585M1281 1163L1343 1186 1413 1200M1819 1116L1892 1071 1959 1020"/>
        <path fill="none" stroke-width="4" d="M1441 598L1522 561 1603 535 1689 517 1771 510 1845 513 1917 528M1413 1201L1496 1204 1574 1197 1657 1180 1740 1152 1819 1116"/>
        <path fill="none" d="M1603 534L1607 548 1634 625 1637 634"/>
      </g>
    </svg>
    <svg class="navcube" viewBox="0 24 708 696">
      <g fill="#cacdec">
        <path d="M370 54l53 54H317zM370 669l53-54H317zM63 361l54-53v106zM678 361l-54-53v106z"/><circle cx="651" cy="82" r="27"/>
        <path d="M282 86l9 36Q235 135 192 184l12 12-63 20 12-70 16 16Q215 103 282 86zM459 86l-9 36q56 13 99 62l-12 12 63 20-12-70-16 16Q526 103 459 86z"/>
      </g>
      <path fill="#a9c6c6" d="M242 236l181-54 36 18 38 112 31 150-23 32-192 44-34-18-68-114-10-17 17-37z"/>
      <path fill="#b7d2d1" d="M242 236l181-54 27 107-232 64zM218 353l232-64 16 54-237 64zM229 407l237-64 39 151-192 44z"/>
      <path fill="none" stroke="#222" stroke-width="3" d="M218 353l24-117 181-54 27 107zM466 343l39 151-192 44-84-131z"/>
      <path fill="none" stroke="#73809a" stroke-width="3" d="M450 289l47 23-31 31zM218 353l-17 37 28 17z"/>
      <g fill="#222" class="cubetext"><text x="291" y="279" font-size="44" font-style="italic" transform="rotate(-14 291 279)">TOP</text><text x="304" y="486" font-size="50" transform="rotate(-14 304 486)">FRONT</text></g>
      <g fill="none" stroke-width="6"><path stroke="#00f" d="M289 581L197 460"/><path stroke="#0f0" d="M289 578l3-70"/><path stroke="#8fff96" d="M292 508l3-71"/><path stroke="#f00" d="M289 581l191-41"/></g>
      <path fill="#c9c9e6" d="M524 553l48 17v63l-48 14-46-16v-61z"/><path fill="#b2b2d2" d="M478 570l46 13v64l-46-16z"/><path fill="#bcbcdc" d="M524 583l48-13v63l-48 14z"/>
      <path fill="#7d7d96" d="M587 585h59l-30 30z"/>
    </svg>
    <svg class="axes" viewBox="0 0 348 366">
      <g stroke-width="7"><path stroke="#822020" d="M156 214l100-24"/><path stroke="#208020" d="M155 213l-3-46"/><path stroke="#202088" d="M155 215l-28-68"/></g>
      <path fill="#822020" d="M240 178l42 3-38 19z"/><path fill="#208020" d="M148 144l17 18-14 15-14-13z"/><path fill="#202088" d="M108 98l36 38-18 14h-18z"/>
      <g class="axistext" font-size="28"><text x="109" y="93">Z</text><text x="151" y="140">Y</text><text x="288" y="177">X</text></g>
    </svg>
  </section>
</main>
</body>
</html>
```
FILE: styles.css
```css
* { box-sizing: border-box; }
html, body { height: 100%; }
body {
  margin: 0;
  display: flex;
  flex-direction: column;
  overflow: hidden;
  background: #f5f5f5;
  color: #4d4d4d;
  font-family: Inter, "Liberation Sans", sans-serif;
  font-size: 25px;
}
button { border: 0; padding: 0; margin: 0; background: none; font: inherit; color: inherit; }
ul { list-style: none; margin: 0; padding: 0; }
svg { display: block; }
.defs { position: absolute; width: 0; height: 0; }

/* icon palettes */
.o { stroke: #0b1521; stroke-width: 1.5px; stroke-linejoin: round; }
.n { fill: none; stroke: #0b1521; stroke-width: 1.5px; }
.yel { --lt: #fce94f; --md: #e6c800; --dk: #c4a000; --fr: #ef1c1c; --fo: #8a0000; }
.red { --lt: #ef2929; --md: #cc0000; --dk: #a40000; --fr: #6f9fd6; --fo: #204a87; }
.blu { --lt: #729fcf; --md: #3465a4; --dk: #204a87; --fr: #ef1c1c; --fo: #7a0000; }
.yel.undo { --fo: #c4a000; }
.grn { --lt: #e4edc9; --md: #ccdda0; --fo: #a9be78; }
.cy { --a: #fce94f; --b: #c4a000; }
.cb { --a: #4a7cbf; --b: #204a87; }
.a { fill: var(--a); stroke: #0b1521; }
.b { fill: var(--b); stroke: #0b1521; }
#cube .n { stroke-width: 1px; }

/* toolbars */
.toolbars { flex: none; display: flex; flex-direction: column; gap: 20px; padding: 4px 0 10px; }
.row { display: flex; align-items: center; height: 62px; }
.group { display: flex; align-items: center; gap: 16px; padding-left: 26px; }
.row > .group:first-child { padding-left: 12px; }
.group.bench { padding-left: 25px; }
.group.grow { flex: 1; padding-left: 20px; }
.group.grow .ext { margin-left: auto; }
.group.last { padding-right: 10px; }
.grip {
  width: 12px;
  height: 58px;
  margin-right: -9px;
  background:
    repeating-linear-gradient(to bottom, transparent 0 4px, #f5f5f5 4px 8px),
    linear-gradient(to right, #bdbdbd 0 4px, transparent 4px 8px, #bdbdbd 8px 12px);
}
.bench .grip { margin-right: -12px; }
.sep { display: flex; justify-content: center; width: 10px; height: 50px; }
.sep::before { content: ""; width: 2px; background: #d5d5d5; }
.tool { position: relative; display: grid; place-items: center; width: 62px; height: 62px; border-radius: 6px; }
.tool > svg:first-child { width: 48px; height: 48px; }
.tool.active { background: #e0e0e0; }
.off { opacity: .5; }
.chev { width: 18px; height: 12px; color: #858585; }
.chev.over { position: absolute; right: 4px; bottom: 5px; }
.drop { display: flex; align-items: flex-end; justify-content: center; width: 24px; height: 54px; }
.ext { margin-left: 5px; }
.ext svg { width: 28px; height: 20px; }

.combo { position: relative; display: flex; width: 340px; height: 44px; border-radius: 6px; background: #e0e0e0; overflow: hidden; }
.combo select {
  flex: 1;
  appearance: none;
  border: 0;
  padding: 0 40px 0 50px;
  background: none;
  color: #707070;
  font: inherit;
}
.combo-icon { position: absolute; left: 6px; top: 6px; width: 32px; height: 32px; }
.combo-arrow { position: absolute; right: 0; top: 0; width: 40px; height: 44px; display: grid; place-items: center; background: #d0d0d0; pointer-events: none; }

/* combo view */
.work { flex: 1; min-height: 0; display: flex; }
.side { flex: none; width: 862px; display: flex; flex-direction: column; padding-top: 8px; }
.dock-title { display: flex; align-items: center; gap: 12px; height: 48px; margin: 0 8px 8px 4px; padding: 0 12px 0 154px; border-radius: 4px; background: #eaeaea; }
.dock-title h1 { flex: 1; margin: 0; text-align: center; font-size: 22px; font-weight: 400; color: #808080; }
.tabs { display: flex; height: 60px; padding-left: 16px; box-shadow: inset 0 -2px #cfcfcf; }
.tab { width: 186px; padding-top: 2px; color: #606060; }
.tab.on { width: 170px; padding: 0 0 6px; background: #f5f5f5; border: 1px solid #cfcfcf; border-top: 8px solid #8fae10; border-bottom: 0; color: #4d4d4d; }
.box { margin: 0 12px 0 8px; border: 2px solid #c3c3c3; border-radius: 8px; background: #efefef; overflow: hidden; }
.head { height: 58px; background: #c3c3c3; font-size: 22px; color: #505050; }
.tree { height: 526px; margin-top: 12px; }
.tree-head { display: grid; grid-template-columns: 492px 1fr; align-items: stretch; }
.tree-head span { display: flex; align-items: center; padding-left: 12px; }
.tree-head span + span { border-left: 2px solid #ababab; }
.app { margin: 0; padding-left: 10px; line-height: 36px; }
.item { display: flex; align-items: center; gap: 12px; height: 40px; }
.item b { font-size: 26px; font-weight: 700; }
.toggle { position: relative; z-index: 1; flex: none; width: 38px; display: grid; place-items: center; }
.toggle .chev { color: #a8a8a8; }
.toggle.shut .chev { transform: rotate(-90deg); }
.ico { flex: none; width: 32px; height: 32px; }
.tree li { position: relative; }
.tree li ul { padding-left: 40px; }
.tree li::before { content: ""; position: absolute; left: 18px; top: 0; width: 22px; height: 22px; border: solid #d9d9d9; border-width: 0 0 2px 2px; }
.tree li:last-child::before { border-bottom-left-radius: 6px; }
.tree li:not(:last-child)::after { content: ""; position: absolute; left: 18px; top: 0; bottom: 0; width: 2px; background: #d9d9d9; }
.handle { flex: none; height: 4px; width: 76px; margin: 20px 0 20px 390px; background: repeating-linear-gradient(to right, #858585 0 12px, transparent 12px 16px); }
.props { flex: 1; min-height: 0; margin-bottom: -2px; }
table { width: 100%; border-collapse: collapse; table-layout: fixed; }
.c-prop { width: 199px; }
th { padding: 0 0 0 12px; text-align: left; font-weight: 400; }
th + th { border-left: 2px solid #ababab; }
td { height: 42px; padding: 0; }
tbody tr:nth-child(even) { background: #e5e5e5; }
.splitter { flex: none; width: 20px; padding-left: 8px; display: flex; align-items: center; }
.handle-v { width: 4px; height: 76px; margin-bottom: -72px; background: repeating-linear-gradient(to bottom, #858585 0 12px, transparent 12px 16px); }

/* 3D view */
.view3d { position: relative; flex: 1; min-width: 0; background: linear-gradient(#333366, #9696aa); }
.scene { width: 100%; height: 100%; }
.navcube { position: absolute; top: 0; right: 0; width: 236px; height: 232px; }
.axes { position: absolute; right: 0; bottom: 0; width: 116px; height: 122px; }
.cubetext { font-family: "Liberation Mono", monospace; }
.axistext { font-family: "DejaVu Sans", sans-serif; }
```
